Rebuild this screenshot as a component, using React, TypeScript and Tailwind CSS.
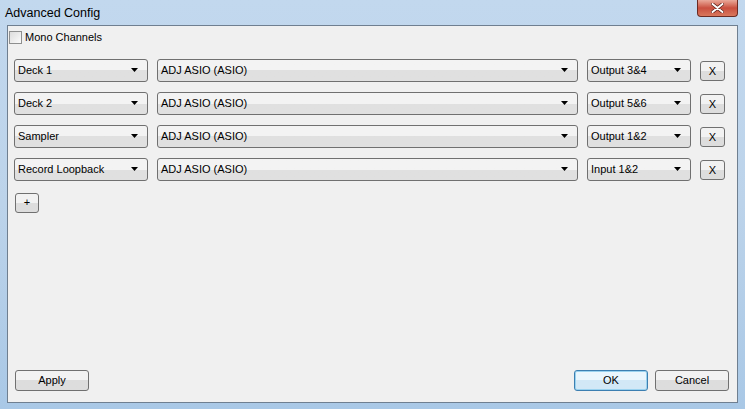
import { ReactNode } from 'react'

const font = { fontFamily: '"Liberation Sans", Arial, sans-serif' }

function Combo({ label, width }: { label: string; width: string }) {
  return (
    <div
      className={`${width} flex h-[23px] items-center justify-between rounded-[3px] border border-[#707070] bg-gradient-to-b from-[#f3f3f3] from-50% to-[#e0e0e0] to-50% pl-[3px] pr-[9px] text-[11px] text-black`}
    >
      <span>{label}</span>
      <svg width="7" height="4" viewBox="0 0 7 4">
        <path d="M0 0h7L3.5 4z" fill="#000" />
      </svg>
    </div>
  )
}

function Button({ children, className = '' }: { children: ReactNode; className?: string }) {
  return (
    <div
      className={`flex items-center justify-center rounded-[3px] border border-[#707070] bg-gradient-to-b from-[#f2f2f2] from-50% to-[#dddddd] to-50% text-[11px] text-black ${className}`}
    >
      {children}
    </div>
  )
}

const rows = [
  { name: 'Deck 1', out: 'Output 3&4' },
  { name: 'Deck 2', out: 'Output 5&6' },
  { name: 'Sampler', out: 'Output 1&2' },
  { name: 'Record Loopback', out: 'Input 1&2' },
]

export default function App() {
  return (
    <div
      style={font}
      className="flex h-[409px] w-[745px] flex-col overflow-hidden bg-gradient-to-b from-[#c2d8ee] via-[#bcd3ea] to-[#a9c8e6]"
    >
      {/* Title bar */}
      <div className="flex h-[25px] shrink-0 items-start justify-between">
        <span className="pl-[5px] pt-[4px] text-[12.5px] text-black">Advanced Config</span>
        <div className="mr-[7px] flex h-[17px] w-[41px] items-center justify-center rounded-b-[4px] border border-t-0 border-[#6b2b23] bg-gradient-to-b from-[#e9a99a] via-[#c94f3f] to-[#d9775c]">
          <svg width="13" height="10" viewBox="0 0 13 10">
            <path d="M1.5 1l10 8M11.5 1l-10 8" stroke="#5b2018" strokeWidth="3.4" strokeLinecap="round" />
            <path d="M1.5 1l10 8M11.5 1l-10 8" stroke="#fff" strokeWidth="2" strokeLinecap="round" />
          </svg>
        </div>
      </div>

      {/* Client area */}
      <div className="mx-[7px] mb-[6px] flex flex-1 flex-col border border-[#6f7f90] bg-[#f0f0f0] pl-[1px]">
        <div className="mt-[3px] flex items-center gap-[3px] text-[11px] text-black">
          <div className="h-[13px] w-[13px] border border-[#8e8f8f] bg-gradient-to-br from-[#dcdcdc] to-[#fbfbfb]" />
          <span>Mono Channels</span>
        </div>

        <div className="ml-[5px] mt-[13px] flex flex-col gap-[10px]">
          {rows.map((r) => (
            <div key={r.name} className="flex items-center">
              <Combo label={r.name} width="w-[134px]" />
              <div className="w-[9px]" />
              <Combo label="ADJ ASIO (ASIO)" width="w-[421px]" />
              <div className="w-[9px]" />
              <Combo label={r.out} width="w-[104px]" />
              <div className="w-[9px]" />
              <Button className="mt-[2px] h-[20px] w-[25px]">X</Button>
            </div>
          ))}
        </div>

        <div className="ml-[6px] mt-[12px]">
          <Button className="h-[20px] w-[24px]">+</Button>
        </div>

        <div className="mt-auto mb-[11px] flex items-center pl-[6px] pr-[8px]">
          <Button className="h-[21px] w-[74px]">Apply</Button>
          <div className="flex-1" />
          <div className="flex h-[21px] w-[74px] items-center justify-center rounded-[3px] border border-[#3c7fb1] bg-gradient-to-b from-[#eaf6fd] from-50% to-[#d2e8f6] to-50% text-[11px] text-black shadow-[inset_0_0_0_1px_#9ad2ef]">
            OK
          </div>
          <div className="w-[7px]" />
          <Button className="h-[21px] w-[74px]">Cancel</Button>
        </div>
      </div>
    </div>
  )
}
